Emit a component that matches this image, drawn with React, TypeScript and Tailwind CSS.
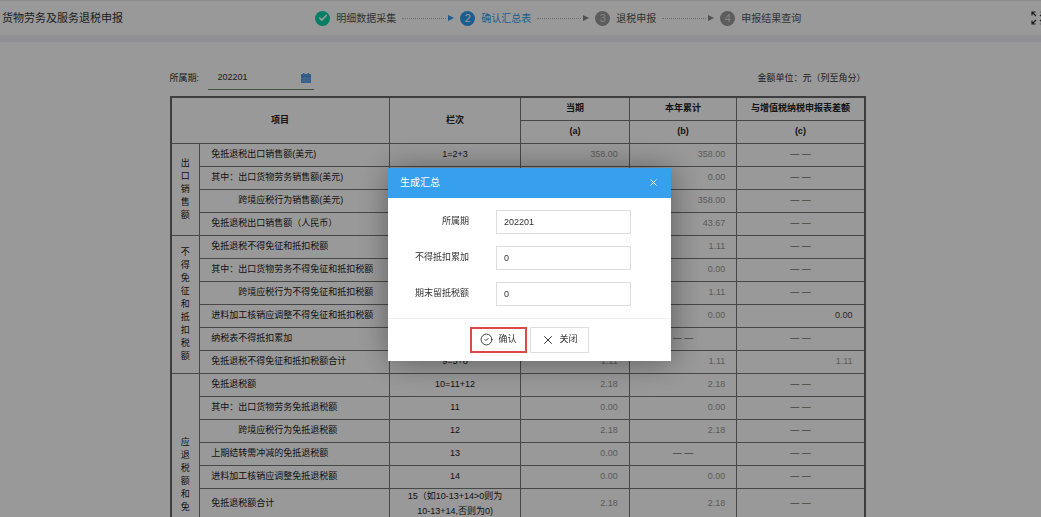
import React, { useState } from 'react';
import { Check, CircleCheck, X } from 'lucide-react';

interface Row {
  label: string;
  indent?: boolean;
  no: string;
  a: string;
  b: string;
  c: string;
}

interface Group {
  title: string;
  alignTop?: boolean;
  rows: Row[];
}

const NONE = '— —';

const GROUPS: Group[] = [
  {
    title: '出口销售额',
    rows: [
      { label: '免抵退税出口销售额(美元)', no: '1=2+3', a: '358.00', b: '358.00', c: NONE },
      { label: '其中：出口货物劳务销售额(美元)', no: '', a: '', b: '0.00', c: NONE },
      { label: '跨境应税行为销售额(美元)', indent: true, no: '', a: '', b: '358.00', c: NONE },
      { label: '免抵退税出口销售额（人民币）', no: '', a: '', b: '43.67', c: NONE },
    ],
  },
  {
    title: '不得免征和抵扣税额',
    rows: [
      { label: '免抵退税不得免征和抵扣税额', no: '', a: '', b: '1.11', c: NONE },
      { label: '其中：出口货物劳务不得免征和抵扣税额', no: '', a: '', b: '0.00', c: NONE },
      { label: '跨境应税行为不得免征和抵扣税额', indent: true, no: '', a: '', b: '1.11', c: NONE },
      { label: '进料加工核销应调整不得免征和抵扣税额', no: '', a: '', b: '0.00', c: '0.00' },
      { label: '纳税表不得抵扣累加', no: '', a: '', b: NONE, c: NONE },
      { label: '免抵退税不得免征和抵扣税额合计', no: '9=5+8', a: '1.11', b: '1.11', c: '1.11' },
    ],
  },
  {
    title: '应退税额和免',
    alignTop: true,
    rows: [
      { label: '免抵退税额', no: '10=11+12', a: '2.18', b: '2.18', c: NONE },
      { label: '其中：出口货物劳务免抵退税额', no: '11', a: '0.00', b: '0.00', c: NONE },
      { label: '跨境应税行为免抵退税额', indent: true, no: '12', a: '2.18', b: '2.18', c: NONE },
      { label: '上期结转需冲减的免抵退税额', no: '13', a: '0.00', b: NONE, c: NONE },
      { label: '进料加工核销应调整免抵退税额', no: '14', a: '0.00', b: '0.00', c: NONE },
      { label: '免抵退税额合计', no: '15（如10-13+14>0则为 10-13+14,否则为0)', a: '2.18', b: '2.18', c: NONE },
    ],
  },
];

const STEPS = ['明细数据采集', '确认汇总表', '退税申报', '申报结果查询'];
const CURRENT_STEP = 1;

const CELL = 'border border-[#777]';

const Steps: React.FC = () => (
  <ol className="flex shrink-0 items-center pl-[3px] text-[10px]">
    {STEPS.map((name, i) => {
      const done = i < CURRENT_STEP;
      const active = i === CURRENT_STEP;
      return (
        <li key={name} className="flex items-center">
          {i > 0 && (
            <>
              <span className="mx-1.5 w-11 border-t border-dotted border-[#bbb]" />
              <svg viewBox="0 0 6 6" className={`-ml-1 mr-1.5 h-1.5 w-1.5 ${active ? 'text-[#2f9cf0]' : 'text-[#888]'}`}>
                <path d="M0 0L6 3L0 6Z" fill="currentColor" />
              </svg>
            </>
          )}
          <span
            className={`mr-1.5 flex h-[15px] w-[15px] items-center justify-center rounded-full text-[11px] ${
              done ? 'bg-[#0ad2a8] text-white' : active ? 'bg-[#2f9cf0] text-white' : 'bg-[#999] text-[#ddd]'
            }`}
          >
            {done ? <Check size={10} strokeWidth={4} /> : i + 1}
          </span>
          <span className={active ? 'text-[#2f9cf0]' : 'text-[#555]'}>{name}</span>
        </li>
      );
    })}
  </ol>
);

const FullscreenIcon: React.FC = () => (
  <svg viewBox="0 0 14 14" className="h-3.5 w-3.5" fill="none" stroke="currentColor" strokeWidth="1.2">
    <path d="M1 4.5V1H4.5M1 1L5 5M9.5 1H13V4.5M13 1L9 5M1 9.5V13H4.5M1 13L5 9M13 9.5V13H9.5M13 13L9 9" />
  </svg>
);

const CalendarIcon: React.FC = () => (
  <svg viewBox="0 0 10 10" className="h-2.5 w-2.5">
    <path d="M2 0H3.5V1H6.5V0H8V1H10V10H0V1H2Z" fill="#5a9ee8" />
    <path d="M0 3.2H10" stroke="#3d7fc9" strokeWidth="0.8" />
    <path d="M0 5.5H10M0 7.8H10M3.3 3V10M6.6 3V10" stroke="#8dbcf0" strokeWidth="0.4" />
  </svg>
);

const AmountCell: React.FC<{ value: string; dark?: boolean }> = ({ value, dark }) =>
  value === NONE ? (
    <td className={`${CELL} text-center text-[#333]`}>{value}</td>
  ) : (
    <td className={`${CELL} pr-[11px] text-right ${dark ? 'text-[#444]' : 'text-[#999]'}`}>{value}</td>
  );

const SummaryTable: React.FC = () => (
  <table className="w-full table-fixed border-collapse border-2 border-[#666] text-[9px] leading-[15px] text-[#222]">
    <colgroup>
      <col className="w-[4.2%]" />
      <col className="w-[27.3%]" />
      <col className="w-[19%]" />
      <col className="w-[15.6%]" />
      <col className="w-[15.5%]" />
      <col className="w-[18.4%]" />
    </colgroup>
    <thead>
      <tr className="h-[23px]">
        <th colSpan={2} rowSpan={2} className={CELL}>项目</th>
        <th rowSpan={2} className={CELL}>栏次</th>
        <th className={CELL}>当期</th>
        <th className={CELL}>本年累计</th>
        <th className={CELL}>与增值税纳税申报表差额</th>
      </tr>
      <tr className="h-[23px]">
        <th className={CELL}>(a)</th>
        <th className={CELL}>(b)</th>
        <th className={CELL}>(c)</th>
      </tr>
    </thead>
    <tbody>
      {GROUPS.map((group) =>
        group.rows.map((row, i) => (
          <tr key={row.label} className="h-[23px]">
            {i === 0 && (
              <th
                rowSpan={group.rows.length}
                className={`${CELL} font-normal leading-[13px] ${group.alignTop ? 'pt-[62px] align-top' : ''}`}
              >
                <span className="mx-auto block w-[9px] break-all">{group.title}</span>
              </th>
            )}
            <td className={`${CELL} whitespace-nowrap ${row.indent ? 'pl-[38px]' : 'pl-[11px]'}`}>{row.label}</td>
            <td className={`${CELL} px-3 text-center`}>{row.no}</td>
            <AmountCell value={row.a} />
            <AmountCell value={row.b} />
            <AmountCell value={row.c} dark={row.c === '0.00'} />
          </tr>
        )),
      )}
    </tbody>
  </table>
);

interface FieldProps {
  id: string;
  label: string;
  value: string;
  onChange: (value: string) => void;
}

const Field: React.FC<FieldProps> = ({ id, label, value, onChange }) => (
  <div className="flex items-center">
    <label htmlFor={id} className="w-[81px] text-right">
      {label}
    </label>
    <input
      id={id}
      value={value}
      onChange={(e) => onChange(e.target.value)}
      className="ml-[27px] h-6 min-w-0 flex-1 border border-[#ddd] px-[7px] outline-none"
    />
  </div>
);

const SummaryDialog: React.FC<{ onClose: () => void }> = ({ onClose }) => {
  const [period, setPeriod] = useState('202201');
  const [deduction, setDeduction] = useState('0');
  const [remaining, setRemaining] = useState('0');

  return (
    <div className="fixed inset-0 flex items-center justify-center bg-black/40 pl-[18px] pt-[11px]">
      <div
        role="dialog"
        aria-labelledby="dialog-title"
        className="w-full max-w-[283px] bg-white text-[9px] text-[#333] shadow-[1px_1px_30px_rgba(0,0,0,0.4)]"
      >
        <header className="flex h-[30px] items-center justify-between bg-[#369fee] px-3 text-white">
          <h2 id="dialog-title" className="text-[10px]">生成汇总</h2>
          <button type="button" aria-label="关闭窗口" onClick={onClose}>
            <X size={11} strokeWidth={2} />
          </button>
        </header>
        <div className="flex flex-col gap-3 py-3 pr-10">
          <Field id="period" label="所属期" value={period} onChange={setPeriod} />
          <Field id="deduction" label="不得抵扣累加" value={deduction} onChange={setDeduction} />
          <Field id="remaining" label="期末留抵税额" value={remaining} onChange={setRemaining} />
        </div>
        <footer className="flex justify-center gap-[3px] border-t border-[#f0f0f0] py-2">
          <button
            type="button"
            onClick={onClose}
            className="flex h-[26px] w-[57px] items-center justify-center gap-[5px] border-2 border-[#e04848]"
          >
            <CircleCheck size={13} strokeWidth={1.7} />
            确认
          </button>
          <button
            type="button"
            onClick={onClose}
            className="flex h-[26px] w-[59px] items-center justify-center gap-1 border border-[#ddd]"
          >
            <X size={14} strokeWidth={1.7} />
            关闭
          </button>
        </footer>
      </div>
    </div>
  );
};

const App: React.FC = () => {
  const [open, setOpen] = useState(true);
  const [period, setPeriod] = useState('202201');

  return (
    <div className="h-screen overflow-hidden bg-white font-['Liberation_Sans','Noto_Sans_CJK_SC',sans-serif] text-[#333]">
      <header className="flex h-[42px] items-center border-b-[7px] border-t border-b-[#eeeef5] border-t-[#e8e8e8]">
        <h1 className="w-[30%] shrink-0 pl-0.5 text-[11px]">货物劳务及服务退税申报</h1>
        <Steps />
        <button type="button" aria-label="全屏" className="-mr-1 ml-auto shrink-0">
          <FullscreenIcon />
        </button>
      </header>

      <main className="pr-1.5 pt-7">
        <div className="mx-auto max-w-[696px]">
          <div className="mb-1.5 flex items-end justify-between text-[9px] leading-[15px]">
            <div className="flex items-end">
              <label htmlFor="report-period" className="w-[38px] pb-1">所属期:</label>
              <div className="flex w-[106px] items-center border-b border-[#6f8f6a] pb-1">
                <input
                  id="report-period"
                  value={period}
                  onChange={(e) => setPeriod(e.target.value)}
                  className="min-w-0 flex-1 pl-2.5 outline-none"
                />
                <button type="button" aria-label="选择日期" className="mr-[3px]">
                  <CalendarIcon />
                </button>
              </div>
            </div>
            <p className="pb-1">金额单位：元（列至角分）</p>
          </div>
          <SummaryTable />
        </div>
      </main>

      {open && <SummaryDialog onClose={() => setOpen(false)} />}
    </div>
  );
};

export default App;
